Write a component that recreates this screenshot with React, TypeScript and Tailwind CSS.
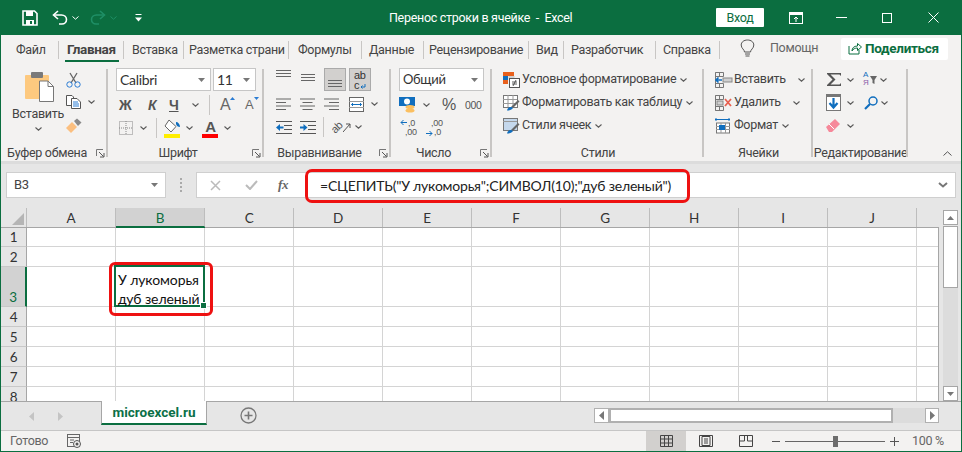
import React from 'react';

function Svg({ w, h, children, className = '' }: { w: number; h: number; children: React.ReactNode; className?: string }) {
  return (
    <svg width={w} height={h} viewBox={`0 0 ${w} ${h}`} fill="none" className={`shrink-0 ${className}`}>
      {children}
    </svg>
  );
}

function Chev({ className = '' }: { className?: string }) {
  return (
    <Svg w={7} h={4} className={className}>
      <path d="M0.5 0.5 L3.5 3.2 L6.5 0.5" stroke="#5a5a5a" strokeWidth="1.1" />
    </Svg>
  );
}

function Launcher() {
  return (
    <Svg w={9} h={9} className="absolute right-[3px] bottom-[3px]">
      <path d="M0.5 7V0.5H7" stroke="#777" />
      <path d="M3 3L7.5 7.5M4 8H8V4" stroke="#555" />
    </Svg>
  );
}

function AlignH({ kind }: { kind: 'l' | 'c' | 'r' }) {
  const widths = [15, 10, 15, 10];
  return (
    <Svg w={15} h={12}>
      {widths.map((w, i) => (
        <rect key={i} x={kind === 'l' ? 0 : kind === 'c' ? (15 - w) / 2 : 15 - w} y={i * 3.5 + 0.5} width={w} height="1" fill="#666" />
      ))}
    </Svg>
  );
}

function Indent({ flip }: { flip?: boolean }) {
  return (
    <Svg w={16} h={13}>
      <rect x="0" y="0" width="16" height="1" fill="#555" />
      <rect x="8" y="4" width="8" height="1" fill="#555" />
      <rect x="8" y="8" width="8" height="1" fill="#555" />
      <rect x="0" y="12" width="16" height="1" fill="#555" />
      {flip ? (
        <path d="M0 5.5H3.5V3L7.5 6.5L3.5 10V7.5H0Z" fill="#106ebe" />
      ) : (
        <path d="M7.5 5.5H4V3L0 6.5L4 10V7.5H7.5Z" fill="#106ebe" />
      )}
    </Svg>
  );
}

function Group({ w, label, launcher, children }: { w: string; label: string; launcher?: boolean; children: React.ReactNode }) {
  return (
    <div className={`${w} relative shrink-0 flex flex-col h-full pt-[6px]`}>
      <div className="flex-1 min-h-0">{children}</div>
      <div className={`h-[16px] text-[12.5px] text-[#444] text-center leading-[15px] whitespace-nowrap ${launcher ? 'pr-[16px]' : ''}`}>{label}</div>
      {launcher && <Launcher />}
      <div className="absolute right-0 top-[7px] bottom-[4px] w-[2px] bg-[#c8c6c4]" />
    </div>
  );
}

const tabs = [
  { t: 'Файл', w: 'w-[58px] pl-[15px]' },
  { t: 'Главная', w: 'w-[65px] pl-[8px] font-bold text-[13.5px]', active: true },
  { t: 'Вставка', w: 'w-[60px] pl-[8px]' },
  { t: 'Разметка страни', w: 'w-[105px] pl-[5px]' },
  { t: 'Формулы', w: 'w-[73px] pl-[9px]' },
  { t: 'Данные', w: 'w-[62px] pl-[7px]' },
  { t: 'Рецензирование', w: 'w-[105px] pl-[5px]' },
  { t: 'Вид', w: 'w-[35px] pl-[7px]' },
  { t: 'Разработчик', w: 'w-[92px] pl-[7px]' },
  { t: 'Справка', w: 'w-[64px] pl-[7px]' },
];

const cols = ['A', 'B', 'C', 'D', 'E', 'F', 'G', 'H', 'I', 'J', ''];
const rows = [
  { n: 1, h: 'h-[20px]' },
  { n: 2, h: 'h-[20px]' },
  { n: 3, h: 'h-[40px]' },
  { n: 4, h: 'h-[20px]' },
  { n: 5, h: 'h-[20px]' },
  { n: 6, h: 'h-[20px]' },
  { n: 7, h: 'h-[20px]' },
  { n: 8, h: 'h-[20px]' },
];

function TitleBar() {
  return (
    <div className="relative h-[35px] shrink-0 bg-[#0b6e40] flex items-center text-white">
      <div className="flex items-center pl-[22px]">
        <Svg w={16} h={16}>
          <path d="M1 1H12.5L15 3.5V15H1Z" stroke="#fff" strokeWidth="1.6" />
          <rect x="4" y="1" width="7" height="5" fill="#fff" />
          <rect x="4" y="10" width="8" height="5" fill="#fff" />
          <rect x="8" y="11" width="2" height="3" fill="#0b6e40" />
        </Svg>
        <Svg w={16} h={15} className="ml-[14px]">
          <path d="M6 1L1.5 5L6 9" stroke="#fff" strokeWidth="1.6" />
          <path d="M2 5H9.5C12.5 5 14.5 7 14.5 9.5C14.5 12 12.5 14 10 14H7" stroke="#fff" strokeWidth="1.6" />
        </Svg>
        <Svg w={7} h={4} className="ml-[4px]">
          <path d="M0.5 0.5L3.5 3.2L6.5 0.5" stroke="#fff" />
        </Svg>
        <Svg w={16} h={15} className="ml-[11px]">
          <path d="M10 1L14.5 5L10 9" stroke="#1f8f66" strokeWidth="1.6" />
          <path d="M14 5H6.5C3.5 5 1.5 7 1.5 9.5C1.5 12 3.5 14 6 14H9" stroke="#1f8f66" strokeWidth="1.6" />
        </Svg>
        <Svg w={7} h={4} className="ml-[4px]">
          <path d="M0.5 0.5L3.5 3.2L6.5 0.5" stroke="#1f8f66" />
        </Svg>
        <Svg w={7} h={8} className="ml-[18px]">
          <rect x="0.5" y="0" width="6" height="1" fill="#fff" />
          <path d="M0 3.5H7L3.5 7.5Z" fill="#fff" />
        </Svg>
      </div>
      <div className="absolute left-[389px] top-[8px] text-[12.5px] leading-[19px] whitespace-pre">Перенос строки в ячейке  -  Excel</div>
      <div className="ml-auto flex items-center">
        <div className="w-[48px] h-[19px] bg-white rounded-[1px] text-[#0b6e40] text-[12.5px] leading-[19px] text-center">Вход</div>
        <Svg w={14} h={12} className="ml-[25px]">
          <rect x="0.5" y="0.5" width="13" height="11" stroke="#fff" />
          <rect x="0" y="0" width="14" height="3" fill="#fff" />
          <path d="M7 10V5M5 7L7 5L9 7" stroke="#fff" />
        </Svg>
        <div className="w-[11px] h-[1px] bg-white ml-[33px]" />
        <div className="w-[10px] h-[10px] border border-white ml-[35px]" />
        <Svg w={11} h={11} className="ml-[36px] mr-[23px]">
          <path d="M0.5 0.5L10.5 10.5M10.5 0.5L0.5 10.5" stroke="#fff" />
        </Svg>
      </div>
    </div>
  );
}

function TabsRow() {
  return (
    <div className="h-[27px] shrink-0 flex items-center text-[12.5px] text-[#444] bg-[#f3f2f1]">
      {tabs.map(tab => (
        <div key={tab.t} className={`${tab.w} relative h-full shrink-0 overflow-hidden whitespace-nowrap pt-[5px] leading-[19px]`}>
          {tab.t}
          <div className="absolute right-0 top-[6px] h-[18px] w-[1px] bg-[#c8c6c4]" />
          {tab.active && <div className="absolute left-[6px] right-[5px] bottom-0 h-[2px] bg-[#0b6e40]" />}
        </div>
      ))}
      <Svg w={15} h={19} className="ml-[20px]">
        <path d="M4.5 13C4.5 10.5 1.2 9.5 1.2 6C1.2 3 4 1 7.5 1C11 1 13.8 3 13.8 6C13.8 9.5 10.5 10.5 10.5 13Z" stroke="#555" />
        <path d="M5 15H10M5.5 17H9.5" stroke="#555" />
      </Svg>
      <div className="w-[49px] ml-[15px] overflow-hidden whitespace-nowrap text-[#666]">Помощник</div>
      <div className="ml-[22px] w-[107px] h-[22px] bg-white rounded-[2px] flex items-center pl-[7px] text-[#0b6e40] font-bold text-[13.5px]">
        <Svg w={14} h={13}>
          <path d="M1 4V12H11V8" stroke="#0b6e40" />
          <path d="M4 9C4 6 6 4 9.5 4V1.5L13.5 5L9.5 8.5V6C7 6 5 7 4 9Z" stroke="#0b6e40" />
        </Svg>
        <span className="ml-[3px]">Поделиться</span>
      </div>
    </div>
  );
}

function ClipboardGroup() {
  return (
    <Group w="w-[106px]" label="Буфер обмена" launcher>
      <div className="flex pl-[9px] h-full">
        <div className="w-[54px] flex flex-col items-center">
          <Svg w={29} h={31} className="ml-[3px] mt-[3px]">
            <rect x="0" y="4" width="24" height="24" rx="1" fill="#fdc97f" />
            <rect x="6" y="1" width="12" height="6" rx="1" fill="#7a7a7a" />
            <path d="M14.5 10H23L28.5 15.5V30.5H14.5Z" fill="#fff" stroke="#777" />
            <path d="M23 10V15.5H28.5" stroke="#777" />
          </Svg>
          <div className="text-[12.5px] text-[#444] leading-[17px] mt-[3px] whitespace-nowrap">Вставить</div>
          <Chev className="mt-[5px]" />
        </div>
        <div className="flex flex-col pl-[1px]">
          <div className="h-[22px] flex items-center pt-[2px]">
            <Svg w={15} h={16}>
              <path d="M4 1L10 11M11 1L5 11" stroke="#666" strokeWidth="1.3" />
              <circle cx="3.5" cy="12.5" r="2.7" stroke="#2b7cd3" />
              <circle cx="11.5" cy="12.5" r="2.7" stroke="#2b7cd3" />
            </Svg>
          </div>
          <div className="h-[24px] flex items-center">
            <Svg w={15} h={14}>
              <path d="M0.5 0.5H6L7.5 2V10.5H0.5Z" stroke="#555" fill="#fff" />
              <path d="M5.5 3.5H11L14.5 7V13.5H5.5Z" stroke="#555" fill="#fff" />
              <path d="M7 7H12M7 9H13M7 11H13" stroke="#2b7cd3" />
            </Svg>
            <Chev className="ml-[7px]" />
          </div>
          <div className="h-[23px] flex items-center">
            <Svg w={16} h={15}>
              <path d="M0 10L6 4L11 9L5 15Z" fill="#fbbf80" />
              <path d="M8 3L11 0.5L15.5 4.5L12 8Z" fill="#8a8a8a" />
            </Svg>
          </div>
        </div>
      </div>
    </Group>
  );
}

function FontGroup() {
  return (
    <Group w="w-[156px]" label="Шрифт" launcher>
      <div className="flex flex-col pl-[8px]">
        <div className="flex h-[23px] gap-[2px] font-['Lato',sans-serif] text-[14px] text-[#333]">
          <div className="w-[95px] h-[23px] bg-white border border-[#c6c6c6] flex items-center pl-[3px]">
            Calibri
            <Svg w={7} h={4} className="ml-auto mr-[5px]"><path d="M0 0H7L3.5 4Z" fill="#777" /></Svg>
          </div>
          <div className="w-[43px] h-[23px] bg-white border border-[#c6c6c6] flex items-center pl-[3px]">
            11
            <Svg w={7} h={4} className="ml-auto mr-[5px]"><path d="M0 0H7L3.5 4Z" fill="#777" /></Svg>
          </div>
        </div>
        <div className="flex items-center h-[25px] mt-[1px] font-bold text-[#555]">
          <span className="w-[26px] pl-[3px] text-[14px] leading-[18px] font-['Liberation_Sans',sans-serif] font-black">Ж</span>
          <span className="w-[21px] italic text-[14px] leading-[18px] pl-[6px] font-['Liberation_Sans',sans-serif]">К</span>
          <span className="w-[22px] pl-[6px] text-[14px] leading-[18px] underline font-['Liberation_Sans',sans-serif]">Ч</span>
          <Chev className="ml-[7px]" />
          <div className="w-[1px] h-[20px] bg-[#c8c6c4] ml-[10px]" />
          <span className="relative ml-[10px] w-[25px] text-[16px] leading-[18px] font-normal text-[#666] font-['Liberation_Sans',sans-serif]">
            A
            <Svg w={5} h={3} className="absolute left-[10px] top-[1px]"><path d="M0 3L2.5 0L5 3Z" fill="#2b7cd3" /></Svg>
          </span>
          <span className="relative w-[15px] text-[13px] leading-[18px] font-normal text-[#666] font-['Liberation_Sans',sans-serif]">
            A
            <Svg w={5} h={3} className="absolute left-[9px] top-[1px]"><path d="M0 0H5L2.5 3Z" fill="#2b7cd3" /></Svg>
          </span>
        </div>
        <div className="flex items-center h-[22px]">
          <Svg w={14} h={14} className="ml-[3px]">
            <rect x="0.5" y="0.5" width="13" height="13" stroke="#888" strokeDasharray="1 1" />
            <path d="M7 0V14M0 7H14" stroke="#888" strokeDasharray="1 1" />
          </Svg>
          <Chev className="ml-[7px]" />
          <div className="w-[1px] h-[20px] bg-[#c8c6c4] ml-[9px]" />
          <Svg w={17} h={19} className="ml-[7px]">
            <path d="M5 1L12 7.5L7 13L1 7Z" stroke="#666" fill="#fff" />
            <path d="M12 3C14 3 16 5 16 8C14 8 12.5 7 12 5Z" fill="#106ebe" />
            <rect x="0" y="15" width="16" height="4" fill="#ffee00" />
          </Svg>
          <Chev className="ml-[5px]" />
          <div className="relative w-[17px] h-[19px] ml-[9px] text-center text-[15px] leading-[15px] font-bold text-[#555] font-['Liberation_Sans',sans-serif]">
            A
            <div className="absolute left-0 bottom-0 w-[16px] h-[4px] bg-[#ff0000]" />
          </div>
          <Chev className="ml-[5px]" />
        </div>
      </div>
    </Group>
  );
}

function AlignGroup() {
  return (
    <Group w="w-[127px]" label="Выравнивание" launcher>
      <div className="flex flex-col pl-[12px]">
        <div className="flex items-start h-[23px]">
          <Svg w={15} h={10} className="mt-[2px]"><path d="M0 0.5H15M0 3.5H15M0 6.5H15" stroke="#666" /></Svg>
          <Svg w={15} h={10} className="ml-[9px] mt-[6px]"><path d="M1 0.5H15M1 3.5H15M1 6.5H15" stroke="#666" /></Svg>
          <div className="ml-[9px] w-[22px] h-[23px] bg-[#d2d0ce] border border-[#aaa] flex items-end justify-center pb-[3px]">
            <Svg w={14} h={7}><path d="M0 0.5H14M0 3.5H14M0 6.5H14" stroke="#666" /></Svg>
          </div>
          <div className="ml-[3px] w-[22px] h-[23px] bg-[#d2d0ce] border border-[#aaa] text-[11px] text-[#333] leading-[10px] pl-[4px] pt-[1px] font-['Liberation_Sans',sans-serif]">
            <div>ab</div>
            <div className="flex items-end">
              c
              <Svg w={6} h={6} className="ml-[1px]"><path d="M5 0V3H1M2.5 1.5L1 3L2.5 4.5" stroke="#106ebe" /></Svg>
            </div>
          </div>
        </div>
        <div className="flex items-center h-[24px] mt-[1px]">
          <AlignH kind="l" />
          <div className="ml-[9px]"><AlignH kind="c" /></div>
          <div className="ml-[9px]"><AlignH kind="r" /></div>
          <Svg w={15} h={15} className="ml-[10px]">
            <rect x="0.5" y="0.5" width="14" height="14" stroke="#666" fill="#fff" />
            <path d="M0 4.5H15M0 10.5H15" stroke="#999" />
            <path d="M2.5 7.5H12.5M4 6L2.5 7.5L4 9M11 6L12.5 7.5L11 9" stroke="#106ebe" />
          </Svg>
          <Chev className="ml-[7px]" />
        </div>
        <div className="flex items-center h-[22px]">
          <Indent />
          <div className="ml-[8px]"><Indent flip /></div>
          <div className="w-[1px] h-[20px] bg-[#c8c6c4] ml-[7px]" />
          <span className="ml-[7px] text-[11px] text-[#555] -rotate-45 leading-[11px] font-['Liberation_Sans',sans-serif]">ab</span>
          <Svg w={8} h={10}><path d="M0 10L7 2M3 2H7V6" stroke="#555" /></Svg>
          <Chev className="ml-[4px]" />
        </div>
      </div>
    </Group>
  );
}

function NumberGroup() {
  return (
    <Group w="w-[101px]" label="Число" launcher>
      <div className="flex flex-col pl-[8px]">
        <div className="w-[85px] h-[23px] bg-white border border-[#c6c6c6] flex items-center pl-[3px] text-[13px] text-[#333] font-['Lato',sans-serif]">
          Общий
          <Svg w={7} h={4} className="ml-auto mr-[5px]"><path d="M0 0H7L3.5 4Z" fill="#777" /></Svg>
        </div>
        <div className="flex items-center h-[25px] mt-[1px] text-[#555]">
          <Svg w={17} h={16}>
            <rect x="0" y="0" width="16" height="9" fill="#106ebe" />
            <circle cx="8" cy="4.5" r="3" fill="#fff" />
            <ellipse cx="11" cy="10" rx="4.5" ry="2" fill="#fbbf60" />
            <ellipse cx="11" cy="13.5" rx="4.5" ry="2" fill="#fbbf60" />
          </Svg>
          <Chev className="ml-[7px]" />
          <span className="ml-[12px] text-[16px] leading-[18px] font-['Liberation_Sans',sans-serif]">%</span>
          <span className="ml-[9px] text-[10.5px] leading-[14px] font-['Liberation_Sans',sans-serif]">000</span>
        </div>
        <div className="flex items-center h-[22px] text-[9px] text-[#555] font-['Liberation_Sans',sans-serif]">
          <div className="relative w-[16px] h-[18px] ml-[1px] pl-[5px]">
            <div className="h-[9px] leading-[9px] pl-[3px]">,0</div>
            <div className="h-[9px] leading-[9px]">,00</div>
            <Svg w={7} h={7} className="absolute left-0 top-0"><path d="M7 3.5H1M3.5 1L1 3.5L3.5 6" stroke="#106ebe" /></Svg>
          </div>
          <div className="relative w-[16px] h-[18px] ml-[10px] pl-[5px]">
            <div className="h-[9px] leading-[9px]">,00</div>
            <div className="h-[9px] leading-[9px] pl-[3px]">,0</div>
            <Svg w={7} h={7} className="absolute left-0 bottom-0"><path d="M0 3.5H6M3.5 1L6 3.5L3.5 6" stroke="#106ebe" /></Svg>
          </div>
        </div>
      </div>
    </Group>
  );
}

function StyleIcon({ kind }: { kind: 'cond' | 'table' | 'cell' }) {
  if (kind === 'cond') {
    return (
      <Svg w={17} h={16}>
        <rect x="0" y="0" width="11" height="4" fill="#e8601c" />
        <rect x="0" y="4" width="5" height="4" fill="#106ebe" />
        <rect x="5.5" y="4" width="6" height="3.5" fill="#d0d0d0" />
        <rect x="0" y="8" width="5" height="4" fill="#e8601c" />
        <rect x="6.5" y="6.5" width="10" height="9" fill="#fff" stroke="#555" />
        <path d="M9 10H14M9 12H14M10 14L13 8" stroke="#333" strokeWidth="0.8" />
      </Svg>
    );
  }
  return (
    <Svg w={17} h={16}>
      <rect x="0.5" y="0.5" width="14" height="12" stroke="#777" fill={kind === 'cell' ? '#c5d8ec' : '#fff'} />
      {kind === 'table' ? (
        <path d="M0 4.5H14M0 8.5H14M5 0V12M10 0V12" stroke="#999" />
      ) : (
        <path d="M0 3.5H14" stroke="#999" />
      )}
      <path d="M8 12L15 5L16.5 6.5L10 13Z" fill="#666" />
      <path d="M4 15.5C5 12 8 11 10 13C9 15 6.5 15.5 4 15.5Z" fill="#106ebe" />
    </Svg>
  );
}

function StylesGroup() {
  const items: { k: 'cond' | 'table' | 'cell'; t: string }[] = [
    { k: 'cond', t: 'Условное форматирование' },
    { k: 'table', t: 'Форматировать как таблицу' },
    { k: 'cell', t: 'Стили ячеек' },
  ];
  return (
    <Group w="w-[212px]" label="Стили">
      <div className="flex flex-col pl-[11px]">
        {items.map(i => (
          <div key={i.t} className="h-[23px] flex items-center text-[12.5px] text-[#444] whitespace-nowrap">
            <StyleIcon kind={i.k} />
            <span className="ml-[2px]">{i.t}</span>
            <Chev className="ml-[4px]" />
          </div>
        ))}
      </div>
    </Group>
  );
}

function CellIcon({ kind }: { kind: 'ins' | 'del' | 'fmt' }) {
  if (kind === 'fmt') {
    return (
      <Svg w={16} h={16}>
        <path d="M0 1.5H15M1 0V3M14 0V3" stroke="#106ebe" />
        <rect x="1.5" y="5" width="13" height="10" fill="#fff" stroke="#777" />
        <path d="M1 8.5H15M1 11.5H15M6 5V15M10.5 5V15" stroke="#999" />
        <rect x="4" y="7" width="6" height="5" fill="#106ebe" />
      </Svg>
    );
  }
  return (
    <Svg w={18} h={16}>
      <path d="M0.5 0.5H8.5V4.5H0.5ZM0.5 11.5H8.5V15.5H0.5ZM0.5 0.5V15.5M4.5 11.5V15.5M4.5 0.5V4.5" stroke="#777" />
      {kind === 'ins' ? (
        <>
          <rect x="8" y="6" width="9" height="4" fill="#d0d0d0" stroke="#888" />
          <path d="M7 8H1M3.5 5.5L1 8L3.5 10.5" stroke="#106ebe" strokeWidth="1.6" />
        </>
      ) : (
        <>
          <rect x="2" y="6" width="6" height="4" fill="#d0d0d0" stroke="#888" />
          <path d="M10 4L16 11M16 4L10 11" stroke="#e86050" strokeWidth="1.8" />
        </>
      )}
    </Svg>
  );
}

function CellsGroup() {
  return (
    <Group w="w-[109px]" label="Ячейки">
      <div className="flex flex-col pl-[11px] text-[12.5px] text-[#444]">
        <div className="h-[23px] flex items-center">
          <CellIcon kind="ins" />
          <span className="ml-[1px]">Вставить</span>
          <Chev className="ml-[12px]" />
        </div>
        <div className="h-[23px] flex items-center">
          <CellIcon kind="del" />
          <span className="ml-[1px]">Удалить</span>
          <Chev className="ml-[12px]" />
        </div>
        <div className="h-[23px] flex items-center">
          <CellIcon kind="fmt" />
          <span className="ml-[3px]">Формат</span>
          <Chev className="ml-[4px]" />
        </div>
      </div>
    </Group>
  );
}

function EditGroup() {
  return (
    <Group w="w-[95px]" label="Редактирование">
      <div className="flex flex-col pl-[13px]">
        <div className="h-[23px] flex items-center">
          <Svg w={16} h={15}>
            <path d="M1 1H15V4L13.5 2.5H4.5L9.5 7.5L4.5 12.5H13.5L15 11V14H1V13L6.5 7.5L1 2Z" fill="#555" />
          </Svg>
          <Chev className="ml-[5px]" />
          <div className="relative w-[14px] h-[17px] ml-[9px] text-[8px] leading-[8px] font-['Liberation_Sans',sans-serif]">
            <div className="text-[#106ebe]">А</div>
            <div className="text-[#8a5aa8]">Я</div>
            <Svg w={7} h={8} className="absolute right-0 top-[5px]"><path d="M0 0H7L4.5 4V8L2.5 7V4Z" fill="#666" /></Svg>
          </div>
          <Chev className="ml-[3px]" />
        </div>
        <div className="h-[23px] flex items-center">
          <Svg w={15} h={17}>
            <rect x="0.5" y="0.5" width="14" height="16" fill="#fff" stroke="#777" />
            <rect x="0" y="0" width="15" height="3" fill="#777" />
            <path d="M7.5 4V13M3.5 9L7.5 13.5L11.5 9" stroke="#106ebe" strokeWidth="2.2" />
          </Svg>
          <Chev className="ml-[6px]" />
          <Svg w={14} h={14} className="ml-[10px]">
            <circle cx="9" cy="5" r="4" stroke="#106ebe" strokeWidth="1.5" />
            <path d="M6 8L1 13" stroke="#106ebe" strokeWidth="2.2" />
          </Svg>
          <Chev className="ml-[3px]" />
        </div>
        <div className="h-[23px] flex items-center">
          <Svg w={14} h={13}>
            <path d="M0 8L9 0L14 5L6 13H3Z" fill="#f6889a" />
            <path d="M3 5L8 10" stroke="#fff" />
          </Svg>
          <Chev className="ml-[7px]" />
        </div>
      </div>
    </Group>
  );
}

function Ribbon() {
  return (
    <div className="relative h-[99px] shrink-0 bg-[#f3f2f1] flex pl-[1px]">
      <ClipboardGroup />
      <FontGroup />
      <AlignGroup />
      <NumberGroup />
      <StylesGroup />
      <CellsGroup />
      <EditGroup />
      <Svg w={9} h={5} className="absolute right-[9px] bottom-[5px]">
        <path d="M0.5 4.5L4.5 0.8L8.5 4.5" stroke="#555" />
      </Svg>
    </div>
  );
}

function FormulaBar() {
  return (
    <div className="relative h-[47px] shrink-0 bg-[#e6e6e6] border-t-[3px] border-[#dcdcdc] flex items-start pt-[8px] pl-[5px]">
      <div className="w-[160px] h-[26px] bg-white border border-[#cfcfcf] flex items-center pl-[7px] text-[13px] text-[#444]">
        B3
        <Svg w={7} h={4} className="ml-auto mr-[7px]"><path d="M0 0H7L3.5 4Z" fill="#777" /></Svg>
      </div>
      <div className="w-[30px] h-[26px] flex flex-col items-center justify-center gap-[2px]">
        <div className="w-[2px] h-[2px] bg-[#aaa]" />
        <div className="w-[2px] h-[2px] bg-[#aaa]" />
        <div className="w-[2px] h-[2px] bg-[#aaa]" />
        <div className="w-[2px] h-[2px] bg-[#aaa]" />
      </div>
      <div className="w-[760px] h-[26px] bg-white border border-[#cfcfcf] flex items-center">
        <Svg w={11} h={11} className="ml-[13px]"><path d="M1 1L10 10M10 1L1 10" stroke="#bbb" strokeWidth="1.5" /></Svg>
        <Svg w={13} h={10} className="ml-[24px]"><path d="M1 5L5 9L12 1" stroke="#bbb" strokeWidth="2" /></Svg>
        <span className="ml-[20px] w-[12px] italic font-bold text-[13px] text-[#666] font-['Liberation_Serif',serif]">fx</span>
        <span className="ml-[30px] text-[14px] tracking-[-0.2px] text-[#222] font-['Lato',sans-serif] whitespace-nowrap">=СЦЕПИТЬ("У лукоморья";СИМВОЛ(10);"дуб зеленый")</span>
        <Svg w={10} h={6} className="ml-auto mr-[7px]"><path d="M1 1L5 4.5L9 1" stroke="#777" strokeWidth="2" /></Svg>
      </div>
      <div className="absolute left-[304px] top-[5px] w-[385px] h-[34px] border-[3px] border-[#ee1111] rounded-[7px]" />
    </div>
  );
}

function SheetGrid() {
  return (
    <div className="w-[938px] shrink-0 flex flex-col overflow-hidden">
      <div className="h-[19px] shrink-0 flex">
        <div className="w-[26px] shrink-0 relative border-r border-[#bdbdbd]">
          <Svg w={12} h={12} className="absolute right-[2px] bottom-[2px]"><path d="M12 0V12H0Z" fill="#b5b5b5" /></Svg>
        </div>
        {cols.map(c => (
          <div
            key={c}
            className={`w-[89px] shrink-0 text-center text-[13.5px] leading-[20px] font-['Lato',sans-serif] border-r border-[#bdbdbd] ${c === 'B' ? 'bg-[#d2d2d2] text-[#0b6e40] border-b border-b-[#0b6e40]' : 'text-[#333]'}`}
          >
            {c}
          </div>
        ))}
      </div>
      <div className="flex-1 min-h-0 overflow-hidden border-r border-[#a6a6a6] relative">
        {rows.map(r => (
          <div key={r.n} className={`${r.h} flex shrink-0`}>
            <div className={`w-[26px] shrink-0 flex items-end justify-center text-[13.5px] leading-[17px] font-['Lato',sans-serif] border-b border-[#c8c8c8] ${r.n === 3 ? 'bg-[#d2d2d2] text-[#0b6e40] border-r-2 border-r-[#0b6e40]' : 'border-r border-r-[#a6a6a6] text-[#333]'}`}>
              {r.n}
            </div>
            {cols.map(c => (
              <div key={c} className={`relative w-[89px] shrink-0 bg-white border-r border-b border-[#d4d4d4] ${r.n === 3 && c === 'B' ? 'z-10' : ''}`}>
                {r.n === 3 && c === 'B' && (
                  <>
                    <div className="absolute -left-[2px] -top-[2px] -right-[1px] -bottom-[1px] border-2 border-[#0b6e40] pl-[2px] text-[14px] tracking-[-0.1px] leading-[19px] text-[#111] font-['Lato',sans-serif] whitespace-nowrap pt-[3px]">
                      <div>У лукоморья</div>
                      <div>дуб зеленый</div>
                    </div>
                    <div className="absolute -right-[3px] -bottom-[3px] w-[5px] h-[5px] bg-[#0b6e40] border border-white box-content" />
                    <div className="absolute -left-[7px] -top-[5px] w-[104px] h-[54px] border-[3px] border-[#ee1111] rounded-[6px]" />
                  </>
                )}
              </div>
            ))}
          </div>
        ))}
        <div className="absolute left-0 right-0 top-0 h-[1px] bg-[#a6a6a6]" />
        <div className="absolute left-[115px] w-[89px] top-0 h-[1px] bg-[#0b6e40]" />
      </div>
    </div>
  );
}

function VScroll() {
  return (
    <div className="flex-1 flex flex-col pl-[4px] pt-[2px]">
      <div className="h-[15px] w-[15px] bg-white border border-[#a6a6a6] flex items-center justify-center">
        <Svg w={7} h={4}><path d="M3.5 0L7 4H0Z" fill="#777" /></Svg>
      </div>
      <div className="h-[62px] w-[15px] bg-white border border-[#a6a6a6] mt-[1px]" />
      <div className="flex-1 w-[15px] bg-[#dcdcdc]" />
      <div className="h-[15px] w-[15px] bg-white border border-[#a6a6a6] flex items-center justify-center">
        <Svg w={7} h={4}><path d="M0 0H7L3.5 4Z" fill="#777" /></Svg>
      </div>
    </div>
  );
}

function SheetTabs() {
  return (
    <div className="h-[29px] shrink-0 bg-[#e6e6e6] flex border-t border-[#a6a6a6]">
      <div className="w-[100px] flex items-center pl-[28px] gap-[24px]">
        <Svg w={5} h={9}><path d="M5 0V9L0 4.5Z" fill="#c4c4c4" /></Svg>
        <Svg w={5} h={9}><path d="M0 0V9L5 4.5Z" fill="#c4c4c4" /></Svg>
      </div>
      <div className="w-[106px] h-[24px] -mt-[1px] bg-white border-x border-[#a6a6a6] border-b-2 border-b-[#0b6e40] text-center text-[13.5px] tracking-normal leading-[22px] font-bold text-[#0b7048]">
        microexcel.ru
      </div>
      <Svg w={17} h={17} className="ml-[33px] mt-[5px]">
        <circle cx="8.5" cy="8.5" r="7.5" stroke="#777" strokeWidth="1.3" />
        <path d="M8.5 4.5V12.5M4.5 8.5H12.5" stroke="#777" strokeWidth="1.6" />
      </Svg>
      <div className="ml-auto flex items-start pt-[6px] mr-[22px]">
        <div className="w-[15px] h-[15px] bg-white border border-[#b0b0b0] flex items-center justify-center">
          <Svg w={5} h={9}><path d="M5 0V9L0 4.5Z" fill="#777" /></Svg>
        </div>
        <div className="w-[284px] h-[15px] bg-white border-2 border-[#b0b0b0]" />
        <div className="w-[32px] h-[15px] bg-[#dcdcdc]" />
        <div className="w-[14px] h-[15px] bg-white border border-[#b0b0b0] flex items-center justify-center">
          <Svg w={5} h={9}><path d="M0 0V9L5 4.5Z" fill="#777" /></Svg>
        </div>
      </div>
    </div>
  );
}

function StatusBar() {
  return (
    <div className="h-[21px] shrink-0 bg-[#f3f2f1] border-t border-[#c6c6c6] flex items-center text-[12.5px] text-[#666]">
      <span className="ml-[9px]">Готово</span>
      <Svg w={14} h={14} className="ml-[19px]">
        <rect x="0.5" y="0.5" width="12" height="12" stroke="#666" />
        <path d="M0 3.5H13M3 6H7M3 8.5H6" stroke="#666" />
        <circle cx="10" cy="10" r="3.5" fill="#f3f2f1" stroke="#555" />
        <circle cx="10" cy="10" r="1.5" fill="#555" />
      </Svg>
      <div className="ml-auto flex items-center h-full">
        <div className="w-[40px] h-full bg-[#d2d0ce] flex items-center justify-center">
          <Svg w={13} h={12}><path d="M0.5 0.5H12.5V11.5H0.5ZM0.5 4H12.5M0.5 8H12.5M4.5 0.5V11.5M8.5 0.5V11.5" stroke="#444" /></Svg>
        </div>
        <Svg w={14} h={12} className="ml-[13px]">
          <path d="M0.5 0.5H13.5V11.5H0.5Z" stroke="#444" />
          <path d="M3 1.5V10.5H11V1.5ZM5 4H9M5 6H9M5 8H9" stroke="#444" />
        </Svg>
        <Svg w={14} h={12} className="ml-[26px]">
          <path d="M0.5 0.5H13.5V11.5H0.5ZM0.5 6H5.5V0.5M8.5 0.5V6H13.5" stroke="#444" />
        </Svg>
        <div className="w-[8px] h-[1px] bg-[#555] ml-[19px]" />
        <div className="relative w-[100px] h-[1px] bg-[#666] ml-[5px]">
          <div className="absolute left-[48px] -top-[5px] w-[5px] h-[11px] bg-[#6d6d6d]" />
        </div>
        <Svg w={9} h={9} className="ml-[5px]"><path d="M4.5 0V9M0 4.5H9" stroke="#555" /></Svg>
        <span className="ml-[13px] mr-[19px] w-[30px] whitespace-nowrap">100 %</span>
      </div>
    </div>
  );
}

export default function App() {
  return (
    <div className="w-[962px] h-[452px] overflow-hidden flex flex-col bg-[#e6e6e6] border-x border-b border-[#0b6e40] tracking-[-0.3px] font-['Roboto',sans-serif]">
      <div className="-mx-[1px] shrink-0 flex flex-col">
        <TitleBar />
      </div>
      <TabsRow />
      <Ribbon />
      <FormulaBar />
      <div className="flex-1 min-h-0 flex">
        <SheetGrid />
        <VScroll />
      </div>
      <SheetTabs />
      <StatusBar />
    </div>
  );
}
